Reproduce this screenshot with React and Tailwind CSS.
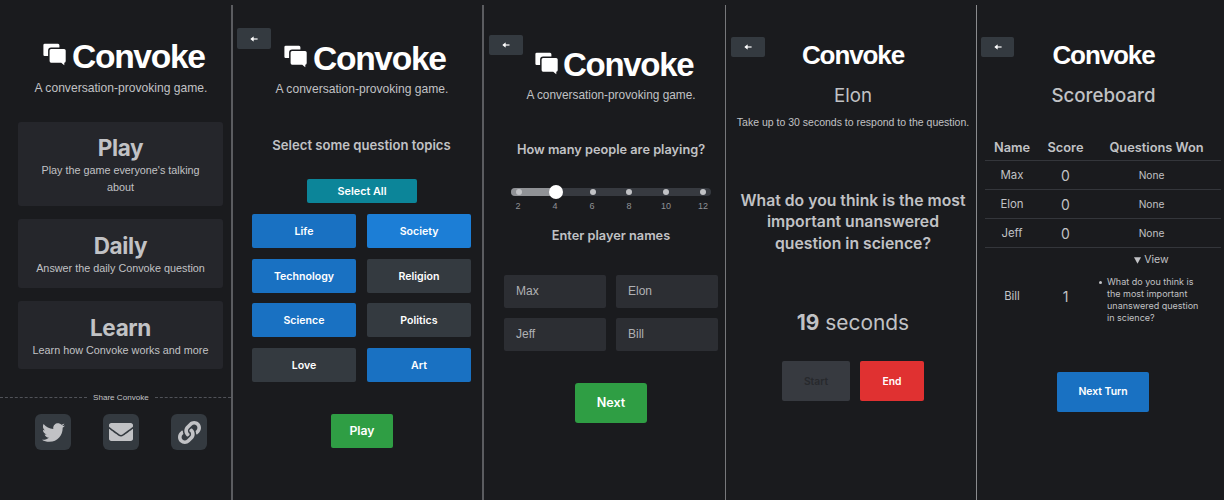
import React from "react";
import { FaTwitter, FaEnvelope, FaLink } from "react-icons/fa";

const HELV = "font-['Liberation_Sans',Arial,sans-serif]";

function Bubbles() {
  return (
    <svg viewBox="0 0 23 23" className="mt-[0.5px] h-[23px] w-[23px] shrink-0" fill="#fff">
      <path d="M1.8 .7H15Q16.4 .7 16.4 2.2V4.6H8.1Q5.1 4.6 5.1 7.6V12.9H1.6Q.4 12.9 .4 11.7V2.1Q.4 .7 1.8 .7Z" />
      <path d="M8.1 6H21.1Q22.7 6 22.7 7.6V18.1Q22.7 19.6 21.3 19.7V22.3L18.2 19.7H8.1Q6.6 19.7 6.6 18.1V7.6Q6.6 6 8.1 6Z" />
    </svg>
  );
}

function Back({ className }) {
  return (
    <button className={`absolute flex items-center justify-center rounded-[2px] bg-[#343a40] ${className}`}>
      <svg viewBox="0 0 8 6" className="h-[6px] w-[8px]" fill="none" stroke="#fff">
        <path d="M1.2 3H7.6" strokeWidth="1.2" />
        <path d="M3.4 .8L.7 3L3.4 5.2Z" fill="#fff" strokeWidth=".5" />
      </svg>
    </button>
  );
}

function Card({ title, children, className }) {
  return (
    <div className={`flex w-[205px] flex-col items-center rounded-[3px] bg-[#25262b] text-center ${className}`}>
      <h2 className="text-[22.5px] leading-[26px] font-bold tracking-[-0.35px]">{title}</h2>
      <p className={`mt-[1px] w-[182px] text-[10.8px] leading-[16.7px] ${HELV}`}>{children}</p>
    </div>
  );
}

function ShareButton({ children }) {
  return (
    <button className="flex h-9 w-9 items-center justify-center rounded-[6px] bg-[#343a40]">{children}</button>
  );
}

function Home() {
  return (
    <section className="w-[233px] shrink-0 border-r-2 border-[#5b5c60]">
      <div className="flex items-start pt-[37px] pl-[43px]">
        <Bubbles />
        <h1 className={`ml-[6px] h-[34px] text-[33.6px] leading-[30px] font-bold tracking-[-1.3px] text-white ${HELV}`}>Convoke</h1>
      </div>
      <p className={`ml-[21px] w-[200px] pt-[4px] text-center text-[12.1px] leading-4 ${HELV}`}>A conversation-provoking game.</p>
      <Card title="Play" className="mt-[26px] ml-[18px] h-[84px] pt-[13px]">Play the game everyone's talking about</Card>
      <Card title="Daily" className="mt-[13px] ml-[18px] h-[69px] pt-[14px]">Answer the daily Convoke question</Card>
      <Card title="Learn" className="mt-[13px] ml-[18px] h-[68px] pt-[14px]">Learn how Convoke works and more</Card>
      <div className={`mt-[22px] flex h-3 items-center gap-[6px] text-[8.1px] leading-3 ${HELV}`}>
        <span className="w-[87px] border-t border-dashed border-[#505258]" />
        <span className="w-[56px] pt-px whitespace-nowrap">Share Convoke</span>
        <span className="flex-1 border-t border-dashed border-[#505258]" />
      </div>
      <div className="mt-[11px] ml-[35px] flex gap-[32px]">
        <ShareButton><FaTwitter size={23} /></ShareButton>
        <ShareButton><FaEnvelope size={24} /></ShareButton>
        <ShareButton><FaLink size={23} /></ShareButton>
      </div>
    </section>
  );
}

const topics = [
  ["Life", "bg-[#1971c2]"],
  ["Society", "bg-[#1c7ed6]"],
  ["Technology", "bg-[#1971c2]"],
  ["Religion", "bg-[#343a40]"],
  ["Science", "bg-[#1971c2]"],
  ["Politics", "bg-[#343a40]"],
  ["Love", "bg-[#343a40]"],
  ["Art", "bg-[#1971c2]"],
];

function Topics() {
  return (
    <section className="relative w-[251px] shrink-0 border-r-2 border-[#5b5c60]">
      <Back className="top-[23px] left-1 h-[21px] w-[34px]" />
      <div className="flex items-start pt-[39px] pl-[51px]">
        <Bubbles />
        <h1 className={`ml-[6px] h-[34px] text-[33.6px] leading-[30px] font-bold tracking-[-1.3px] text-white ${HELV}`}>Convoke</h1>
      </div>
      <p className={`ml-[29px] w-[200px] pt-[3px] text-center text-[12.1px] leading-4 ${HELV}`}>A conversation-provoking game.</p>
      <h2 className="mt-[38px] ml-[19px] w-[219px] text-center text-[13.1px] leading-5 font-semibold">Select some question topics</h2>
      <button className="mt-[24px] ml-[74px] block h-[24px] w-[110px] rounded-[2px] bg-[#0c8599] pt-px text-[10.8px] leading-[24px] font-semibold text-white">Select All</button>
      <div className="mt-[11px] ml-[19px] grid w-[219px] grid-cols-2 gap-x-[11px] gap-y-[10.5px]">
        {topics.map(([name, bg]) => (
          <button key={name} className={`h-[34px] rounded-[2px] pt-[2px] text-[10.6px] font-semibold text-white ${bg}`}>{name}</button>
        ))}
      </div>
      <button className="mt-[32px] ml-[98px] block h-[34px] w-[62px] rounded-[2px] bg-[#2f9e44] pt-px text-[12.2px] font-semibold text-white">Play</button>
    </section>
  );
}

const marks = [2, 4, 6, 8, 10, 12];

function Players() {
  return (
    <section className="relative w-[242px] shrink-0 border-r border-[#77787b]">
      <Back className="top-[30px] left-[5px] h-[20px] w-[34px]" />
      <div className="flex items-start pt-[46px] pl-[51px]">
        <Bubbles />
        <h1 className={`ml-[5px] h-[32px] text-[33px] leading-[27px] font-bold tracking-[-1.3px] text-white ${HELV}`}>Convoke</h1>
      </div>
      <p className={`ml-[27px] w-[200px] pt-[4px] text-center text-[11.85px] leading-4 ${HELV}`}>A conversation-provoking game.</p>
      <h2 className="mt-[37px] ml-[7px] w-[240px] text-center text-[12.75px] leading-5 font-semibold">How many people are playing?</h2>
      <div className="relative mt-[28px] ml-[27px] h-[8px] w-[200px] rounded-full bg-[#373a40]">
        <div className="h-full w-[45px] rounded-l-full bg-[#909296]" />
        <div className="absolute inset-y-0 left-[5px] flex w-[190px] items-center justify-between">
          {marks.map((m) => (
            <span key={m} className="h-[6px] w-[6px] rounded-full bg-[#c1c2c5]" />
          ))}
        </div>
        <span className="absolute top-[-3px] left-[38px] h-[14px] w-[14px] rounded-full bg-white" />
      </div>
      <div className={`mt-[4px] ml-[22px] flex w-[209px] justify-between text-[9px] leading-3 text-[#909296] ${HELV}`}>
        {marks.map((m) => (
          <span key={m} className="w-6 text-center">{m}</span>
        ))}
      </div>
      <h2 className="mt-[14px] ml-[7px] w-[240px] text-center text-[12.75px] leading-5 font-semibold">Enter player names</h2>
      <div className={`mt-[29px] ml-[20px] grid w-[214px] grid-cols-2 gap-x-[10px] gap-y-[10px] text-[12px] leading-[33px] text-[#b0b1b4] ${HELV}`}>
        {["Max", "Elon", "Jeff", "Bill"].map((n) => (
          <div key={n} className="h-[33px] rounded-[2px] bg-[#2c2e33] pl-3">{n}</div>
        ))}
      </div>
      <button className="mt-[32px] ml-[91px] block h-[40px] w-[72px] rounded-[3px] bg-[#2f9e44] pt-px text-[12.6px] font-semibold text-white">Next</button>
    </section>
  );
}

function Question() {
  return (
    <section className="relative w-[251px] shrink-0 border-r border-[#8a8b8e]">
      <Back className="top-[32px] left-[5px] h-[20px] w-[34px]" />
      <div className="flex w-[254px] flex-col items-center text-center">
        <h1 className={`mt-[36px] text-[26px] leading-[28px] font-bold tracking-[-1.1px] text-white ${HELV}`}>Convoke</h1>
        <h2 className="mt-[15px] text-[18.7px] leading-6">Elon</h2>
        <p className={`mt-[6px] text-[10.5px] leading-4 whitespace-nowrap ${HELV}`}>Take up to 30 seconds to respond to the question.</p>
        <h3 className="mt-[60px] text-[15.75px] leading-[21.3px] font-semibold whitespace-nowrap">
          What do you think is the most<br />important unanswered<br />question in science?
        </h3>
        <p className="mt-[55px] text-[20.9px] leading-7"><b className="font-bold">19</b> seconds</p>
      </div>
      <div className="mt-[24px] ml-[56px] flex gap-[10px] text-[10.3px] font-semibold">
        <button className="h-[40px] w-[68px] rounded-[2px] bg-[#373a40] pt-px text-[#27292d]">Start</button>
        <button className="h-[40px] w-[64px] rounded-[2px] bg-[#e03131] pt-px text-white">End</button>
      </div>
    </section>
  );
}

function Scoreboard() {
  return (
    <section className="relative w-[247px] shrink-0">
      <Back className="top-[32px] left-[4px] h-[20px] w-[33px]" />
      <div className="flex w-[253px] flex-col items-center">
        <h1 className={`mt-[36px] text-[26px] leading-[28px] font-bold tracking-[-1.1px] text-white ${HELV}`}>Convoke</h1>
        <h2 className="mt-[15px] text-[18.7px] leading-6 font-medium">Scoreboard</h2>
      </div>
      <div className="mt-[27px] ml-[8px] w-[236px] text-center">
        <div className="grid h-[26px] grid-cols-[54px_53px_129px] items-center border-b border-[#34363b] pt-px text-[12.8px] font-semibold">
          <span>Name</span>
          <span>Score</span>
          <span>Questions Won</span>
        </div>
        {["Max", "Elon", "Jeff"].map((n) => (
          <div key={n} className="grid h-[29px] grid-cols-[54px_53px_119px] items-center border-b border-[#34363b] pt-[2px]">
            <span className="text-[11.4px]">{n}</span>
            <span className="pb-[2px] text-[14px]">0</span>
            <span className="text-[10.2px]">None</span>
          </div>
        ))}
        <div className="grid h-[98px] grid-cols-[54px_53px_129px] items-center">
          <span className="text-[11.4px]">Bill</span>
          <span className="pb-px text-[14px]">1</span>
          <div className="flex h-full flex-col pt-[4px]">
            <p className="flex w-[119px] items-center justify-center gap-[3px] text-[10.6px] leading-4">
              <svg viewBox="0 0 7 7" className="h-[7px] w-[7px]" fill="currentColor"><path d="M0 .3H7L3.5 6.7Z" /></svg>
              View
            </p>
            <div className="mt-[8px] ml-[7px] flex text-left text-[9px] leading-[12.1px]">
              <span className="mt-[5px] h-[3px] w-[3px] rounded-full bg-[#c1c2c5]" />
              <p className="ml-[5px] whitespace-nowrap">What do you think is<br />the most important<br />unanswered question<br />in science?</p>
            </div>
          </div>
        </div>
      </div>
      <button className="mt-[26px] ml-[80px] block h-[40px] w-[92px] rounded-[2px] bg-[#1971c2] text-[10.4px] font-semibold text-white">Next Turn</button>
    </section>
  );
}

export default function App() {
  return (
    <main className="flex h-[500px] w-[1224px] overflow-hidden bg-[#1a1b1e] pt-[5px] font-['Inter',sans-serif] text-[#c1c2c5]">
      <Home />
      <Topics />
      <Players />
      <Question />
      <Scoreboard />
    </main>
  );
}
